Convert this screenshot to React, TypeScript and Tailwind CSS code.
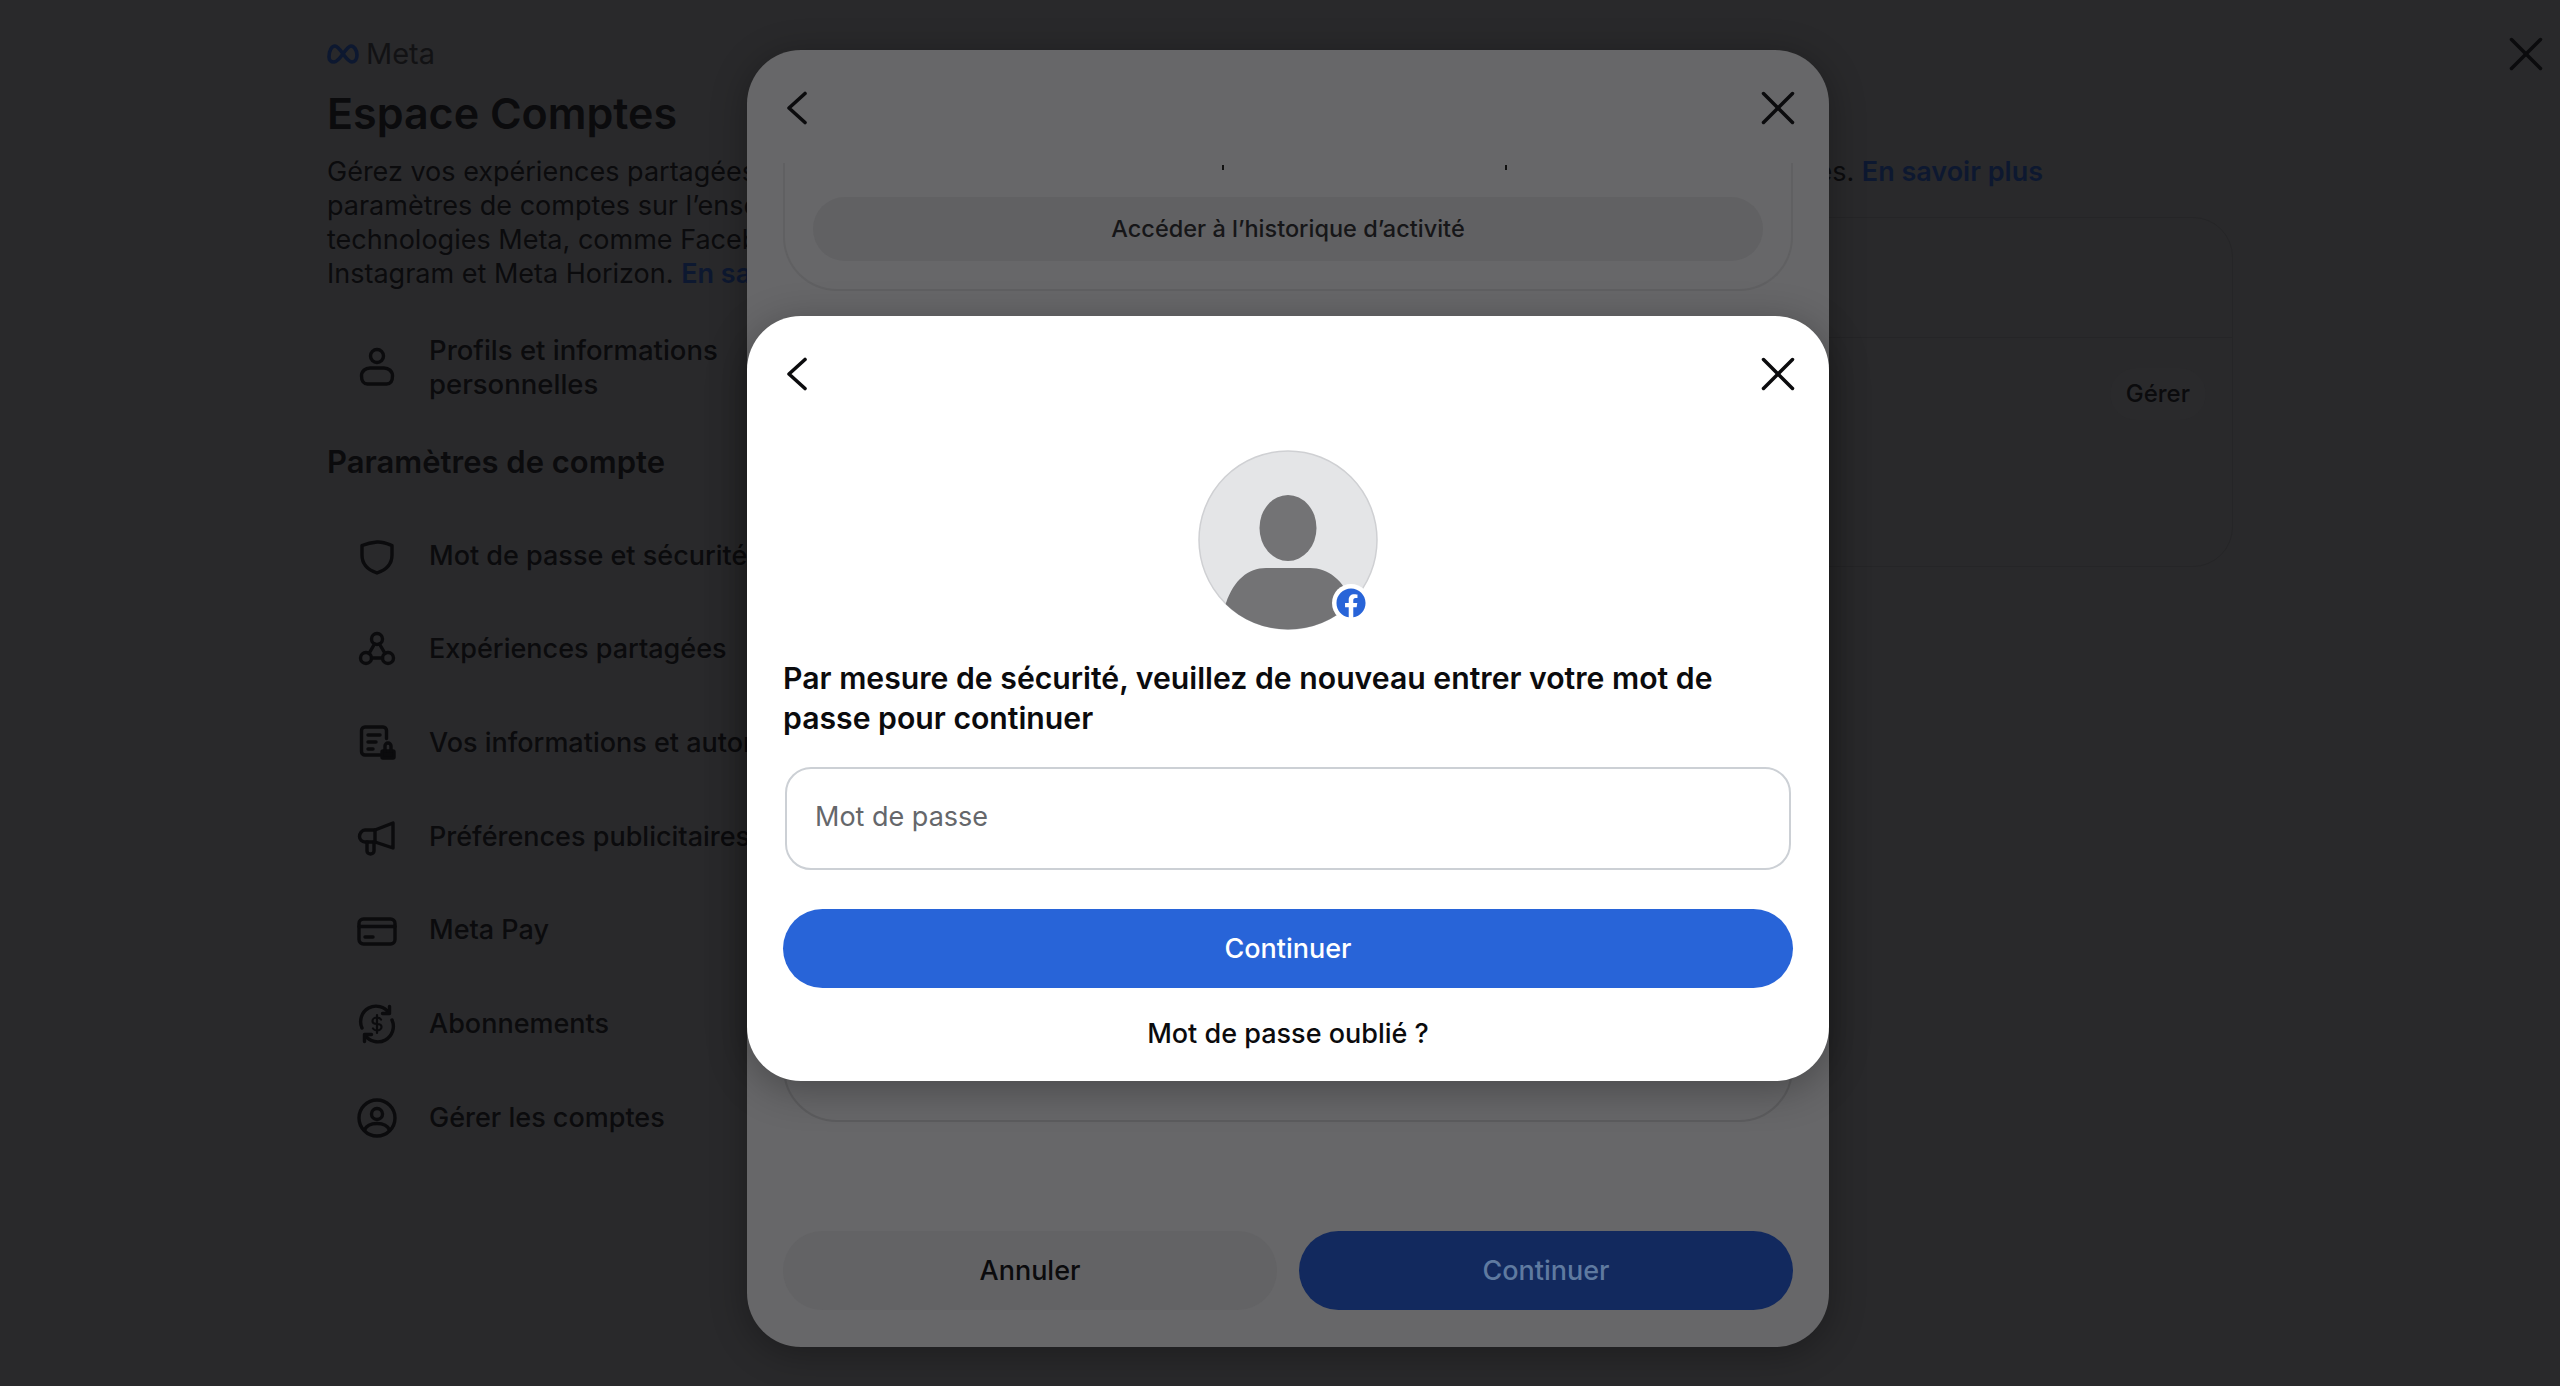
import { X } from 'lucide-react';
import type { ReactNode } from 'react';
import { FaFacebook } from 'react-icons/fa';

function Svg({ children }: { children: ReactNode }) {
  return (
    <svg
      viewBox="0 0 40 40"
      className="h-10 w-10 shrink-0"
      fill="none"
      stroke="#0b0b0d"
      strokeWidth={3.400}
      strokeLinecap="round"
      strokeLinejoin="round"
    >
      {children}
    </svg>
  );
}

const icons: Record<string, ReactNode> = {
  person: (
    <Svg>
      <circle cx="20" cy="9" r="6.500" />
      <path d="M4.500 29c0-5 4-8 8.500-8h14c4.500 0 8.500 3 8.500 8 0 5-2 8-6 8H10.500c-4 0-6-3-6-8z" />
    </Svg>
  ),
  shield: (
    <Svg>
      <path d="M5 9.500C10 7.500 14 6.500 20 6s10 1.500 15 3.500v9.500c0 9-6 15-15 18C11 34 5 28 5 19z" />
    </Svg>
  ),
  shared: (
    <Svg>
      <circle cx="20" cy="9" r="5.500" />
      <circle cx="9" cy="28" r="5.500" />
      <circle cx="31" cy="28" r="5.500" />
      <path d="M17.500 14 12 23.500M22.500 14 28 23.500M14.500 28h11" />
    </Svg>
  ),
  info: (
    <Svg>
      <path d="M23 32H8c-2 0-3.500-1.500-3.500-3.500V7.500C4.500 5.500 6 4 8 4h18c2 0 3.500 1.500 3.500 3.500v8" />
      <path d="M11 12h12M11 19h8M11 26h5" />
      <rect x="25" y="28" width="12" height="7" rx="1" fill="#0b0b0d" />
      <path d="M28 28v-5a3 3 0 0 1 6 0v5" />
    </Svg>
  ),
  ads: (
    <Svg>
      <path d="M36 6v25L18 25H8c-3 0-5.500-2.500-5.500-5.500S5 13 8 13h10z" />
      <path d="M10 25v9c0 4 7 4 7 0v-9M18 13v12" />
    </Svg>
  ),
  card: (
    <Svg>
      <rect x="2" y="8" width="36" height="25" rx="4.500" />
      <path d="M2 15.500h36M8 26h8" />
    </Svg>
  ),
  sub: (
    <Svg>
      <path d="M5 24A15.500 15.500 0 0 1 32 9M35 16a15.500 15.500 0 0 1-27 15" />
      <path d="M32.500 2.500V9.500h-7M7.500 37.500V30.500h7" />
      <path
        d="M24 15.500c-1-1.500-2.500-2-4-2-2.500 0-4.500 1.500-4.500 3.500s2 3 4.500 3 4.500 1 4.500 3-2 3.500-4.500 3.500c-1.500 0-3-.5-4-2M20 11v18"
        strokeWidth={2.200}
      />
    </Svg>
  ),
  account: (
    <Svg>
      <circle cx="20" cy="20" r="18" />
      <circle cx="20" cy="16" r="5.500" />
      <path d="M7.500 32c2-4.500 6-6.500 12.500-6.500s10.500 2 12.500 6.500" />
    </Svg>
  ),
};

const settings = [
  { icon: 'shield', label: 'Mot de passe et sécurité' },
  { icon: 'shared', label: 'Expériences partagées' },
  { icon: 'info', label: 'Vos informations et autorisations' },
  { icon: 'ads', label: 'Préférences publicitaires' },
  { icon: 'card', label: 'Meta Pay' },
  { icon: 'sub', label: 'Abonnements' },
  { icon: 'account', label: 'Gérer les comptes' },
];

function ModalHeader() {
  return (
    <div className="flex h-[58px] items-center justify-between pl-[38px] pr-[22px]">
      <svg
        viewBox="0 0 24 34"
        className="h-[34px] w-[24px]"
        fill="none"
        stroke="#0b0b0d"
        strokeWidth={3.600}
        strokeLinecap="round"
        strokeLinejoin="round"
      >
        <path d="M20 2.500 4 17l16 14.500" />
      </svg>
      <X className="h-[58px] w-[58px] text-[#0b0b0d]" strokeWidth={1.450} />
    </div>
  );
}

function Sidebar() {
  return (
    <aside className="w-[500px] shrink-0 pl-[327px] box-content text-[#0b0b0d]">
      <div className="flex h-[70px] items-center gap-[7px] pt-[38px]">
        <svg viewBox="0 0 32 20" className="h-[20px] w-[32px]" fill="none" stroke="#0d1830" strokeWidth={3.600}>
          <path d="M2 13C2 6 5 2 8 2c5 0 11 16 17 16 3 0 5-3 5-7 0-5-3-9-6-9-5 0-11 16-17 16-3 0-5-2-5-5z" />
        </svg>
        <span className="text-[29px] leading-[32px] text-[#121214]">Meta</span>
      </div>
      <h1 className="mt-[15px] text-[43px] leading-[56px] font-semibold whitespace-nowrap">Espace Comptes</h1>
      <p className="mt-[14px] text-[27px] leading-[34px] whitespace-nowrap">
        Gérez vos expériences partagées et les
        <br />
        paramètres de comptes sur l’ensemble des
        <br />
        technologies Meta, comme Facebook,
        <br />
        Instagram et Meta Horizon. <span className="font-semibold text-[#0d1830]">En savoir plus</span>
      </p>
      <div className="mt-[42px] flex items-center gap-[32px] pl-[30px]">
        {icons.person}
        <span className="text-[27.500px] leading-[34px] font-medium">
          Profils et informations
          <br />
          personnelles
        </span>
      </div>
      <h2 className="mt-[41px] text-[31px] leading-[40px] font-semibold whitespace-nowrap">Paramètres de compte</h2>
      <ul className="mt-[27px] flex flex-col">
        {settings.map((item) => (
          <li key={item.label} className="flex h-[93.700px] items-center gap-[32px] pl-[30px] whitespace-nowrap">
            {icons[item.icon]}
            <span className="text-[27px] font-medium">{item.label}</span>
          </li>
        ))}
      </ul>
    </aside>
  );
}

function MainColumn() {
  return (
    <main className="w-[1216px] pt-[155px] text-[#0b0b0d]">
      <p className="text-right text-[27px] leading-[34px] whitespace-nowrap">
        Gérez vos paramètres de compte et vos expériences connectées.{' '}
        <span className="font-semibold text-[#0d1830]">En savoir plus</span>
      </p>
      <div className="mt-[28px] w-[1406px] rounded-[40px] border border-[#252527]">
        <div className="h-[120px] border-b border-[#252527]" />
        <div className="flex h-[228px] items-start justify-end pt-[30px] pr-[26px]">
          <span className="rounded-full bg-[#2a2a2c] px-[16px] py-[8px] text-[24px] font-medium">Gérer</span>
        </div>
      </div>
    </main>
  );
}

function BackModal() {
  return (
    <div className="absolute left-[747px] top-[50px] flex h-[1297px] w-[1082px] flex-col rounded-[54px] bg-[#676769] shadow-[0_6px_36px_rgba(0,0,0,0.3)]">
      <div className="pt-[29px]">
        <ModalHeader />
      </div>
      <div className="mt-[26px] h-[965px] overflow-hidden px-[36px]">
        <div className="relative flex h-[128px] items-end rounded-b-[54px] border-x-2 border-b-2 border-[#606062] px-[28px] pb-[28px]">
          <span className="absolute left-[437px] top-[2px] h-[5px] w-[2px] bg-[#111]" />
          <span className="absolute left-[720px] top-[2px] h-[5px] w-[2px] bg-[#111]" />
          <div className="flex h-[64px] w-full items-center justify-center rounded-[32px] bg-[#616163] text-[23.500px] font-medium text-[#161618]">
            Accéder à l’historique d’activité
          </div>
        </div>
        <div className="mt-[40px] h-[791px] rounded-[54px] border-2 border-[#5c5c5e]" />
      </div>
      <div className="mt-auto flex gap-[22px] px-[36px] pb-[37px]">
        <div className="flex h-[79px] flex-1 items-center justify-center rounded-full bg-[#636365] pt-[2px] text-[27px] font-medium text-[#0b0b0d]">
          Annuler
        </div>
        <div className="flex h-[79px] flex-1 items-center justify-center rounded-full bg-[#12295e] pt-[2px] text-[27px] font-medium text-[#5f7aa0]">
          Continuer
        </div>
      </div>
    </div>
  );
}

function Avatar() {
  return (
    <div className="relative h-[180px] w-[180px]">
      <svg viewBox="0 0 180 180" className="h-full w-full">
        <defs>
          <clipPath id="avatar-clip">
            <circle cx="90" cy="90" r="89.500" />
          </clipPath>
        </defs>
        <circle cx="90" cy="90" r="89" fill="#e4e5e7" stroke="#cfd0d3" strokeWidth="1.500" />
        <ellipse cx="90" cy="78" rx="28.500" ry="33" fill="#737375" />
        <path
          d="M14 190 28 153C36 130 50 118 68 118H112C130 118 146 130 154 153L166 190Z"
          fill="#737375"
          clipPath="url(#avatar-clip)"
        />
      </svg>
      <span className="absolute left-[134px] top-[134px] flex h-[38px] w-[38px] items-center justify-center rounded-full bg-white">
        <FaFacebook className="h-[30px] w-[30px] text-[#2864d8]" />
      </span>
    </div>
  );
}

function PasswordModal() {
  return (
    <div className="absolute left-[747px] top-[316px] flex h-[765px] w-[1082px] flex-col rounded-[54px] bg-white shadow-[0_8px_40px_rgba(0,0,0,0.3)]">
      <div className="pt-[29px]">
        <ModalHeader />
      </div>
      <div className="mt-[47px] flex justify-center">
        <Avatar />
      </div>
      <div className="flex flex-col px-[36px]">
        <h2 className="mt-[28px] text-[30.200px] leading-[40px] font-semibold text-[#0b0b0d]">
          Par mesure de sécurité, veuillez de nouveau entrer votre mot de passe pour continuer
        </h2>
        <div className="mx-[2px] mt-[29px] flex h-[103px] items-center rounded-[26px] border-2 border-[#ccd0d5] px-[28px] pb-[2px] text-[27px] text-[#65676b]">
          Mot de passe
        </div>
        <div className="mt-[39px] flex h-[79px] items-center justify-center rounded-full bg-[#2864d8] pt-[2px] text-[27px] font-medium text-white">
          Continuer
        </div>
        <div className="mt-[29px] text-center text-[27px] leading-[34px] font-medium text-[#0b0b0d]">
          Mot de passe oublié ?
        </div>
      </div>
    </div>
  );
}

export default function App() {
  return (
    <div className="relative flex h-[1386px] w-[2560px] overflow-hidden bg-[#29292b] font-['Inter',sans-serif]">
      <Sidebar />
      <MainColumn />
      <BackModal />
      <PasswordModal />
      <X className="absolute right-[5px] top-[25px] h-[58px] w-[58px] text-[#0b0b0d]" strokeWidth={1.450} />
    </div>
  );
}
